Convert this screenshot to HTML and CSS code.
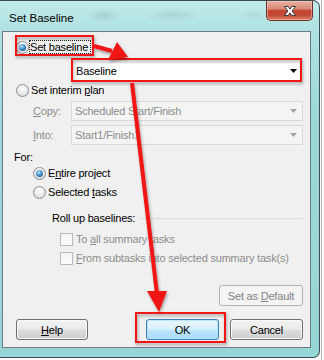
FILE: index.html
```html
<!DOCTYPE html>
<html>
<head>
<meta charset="utf-8">
<link rel="stylesheet" href="styles.css">
</head>
<body>
<div class="screen">
  <div class="window">
    <div class="titlebar">
      <span class="title">Set Baseline</span>
      <div class="close">
        <svg width="14" height="12" viewBox="0 0 14 12"><path d="M1.5 1.5H5.2L7 4.1L8.8 1.5H12.5L9.1 6L12.5 10.5H8.8L7 7.9L5.2 10.5H1.5L4.9 6Z" fill="#fff" stroke="#3b3b3b" stroke-width="1" stroke-linejoin="round"/></svg>
      </div>
    </div>
    <div class="client">
      <div class="row r-setbase"><span class="radio on"></span><span class="focus">Set baseline</span></div>
      <div class="combo main"><span class="ctext">Baseline</span><svg class="arrow" width="7" height="4" viewBox="0 0 7 4"><path d="M0 0H7L3.5 4Z" fill="#000"/></svg></div>
      <div class="row r-interim"><span class="radio"></span><span class="lbl">Set interim <u>p</u>lan</span></div>
      <div class="field r-copy"><span class="flabel"><u>C</u>opy:</span><div class="combo dis"><span class="ctext">Scheduled Start/Finish</span><svg class="arrow" width="7" height="4" viewBox="0 0 7 4"><path d="M0 0H7L3.5 4Z" fill="#a3a3a3"/></svg></div></div>
      <div class="field r-into"><span class="flabel"><u>I</u>nto:</span><div class="combo dis"><span class="ctext">Start1/Finish1</span><svg class="arrow" width="7" height="4" viewBox="0 0 7 4"><path d="M0 0H7L3.5 4Z" fill="#a3a3a3"/></svg></div></div>
      <div class="row r-for">For:</div>
      <div class="row r-entire"><span class="radio on"></span><span class="lbl">E<u>n</u>tire project</span></div>
      <div class="row r-selected"><span class="radio"></span><span class="lbl">Selected <u>t</u>asks</span></div>
      <div class="row r-rollup"><span>Roll up baselines:</span><span class="sep"></span></div>
      <div class="row r-cb1 dis"><span class="check"></span><span class="clbl">To <u>a</u>ll summary tasks</span></div>
      <div class="row r-cb2 dis"><span class="check"></span><span class="clbl"><u>F</u>rom subtasks into selected summary task(s)</span></div>
      <div class="r-default"><span class="btn disabled"><span>Set as <u>D</u>efault</span></span></div>
      <div class="buttons"><span class="btn help"><span><u>H</u>elp</span></span><span class="btn ok">OK</span><span class="btn cancel">Cancel</span></div>
    </div>
  </div>
  <svg class="annot" width="324" height="360" viewBox="0 0 324 360">
    <defs>
      <filter id="sh" x="-20%" y="-20%" width="140%" height="140%">
        <feDropShadow dx="1" dy="2" stdDeviation="1.5" flood-color="#000" flood-opacity="0.35"/>
      </filter>
    </defs>
    <g fill="none" stroke="#f01414" stroke-width="2" filter="url(#sh)">
      <rect x="16" y="36" width="77" height="19"/>
      <rect x="72" y="59" width="229" height="22"/>
      <rect x="136" y="313" width="89" height="29"/>
    </g>
    <g filter="url(#sh)">
      <line x1="94" y1="46" x2="112" y2="51" stroke="#f01414" stroke-width="4"/>
      <polygon points="117,42 108,60 128,57" fill="#f01414"/>
      <line x1="132" y1="83" x2="157" y2="294" stroke="#f01414" stroke-width="4"/>
      <polygon points="147,291 167,291 159,312" fill="#f01414"/>
    </g>
  </svg>
</div>
</body>
</html>
```

FILE: styles.css
```css
html, body {
  margin: 0;
  padding: 0;
}

body {
  font-family: "Liberation Sans", Arial, sans-serif;
  font-size: 11px;
  letter-spacing: -0.2px;
  color: #000;
  background: #f7f7f7;
}

.screen {
  position: relative;
  width: 324px;
  height: 360px;
  overflow: hidden;
  background:
    repeating-linear-gradient(to right, transparent 0, transparent 321px, #b8b8b8 321px, #b8b8b8 322px, transparent 322px, transparent 324px),
    #fafafa;
}

.window {
  box-sizing: border-box;
  width: 320px;
  height: 358px;
  border: 1px solid #3e4c52;
  border-left: none;
  border-radius: 0 7px 7px 0;
  padding-left: 2px;
  background:
    radial-gradient(ellipse 18px 7px at 104px 14px, rgba(90, 120, 120, 0.18), transparent),
    radial-gradient(ellipse 28px 7px at 172px 14px, rgba(90, 120, 120, 0.16), transparent),
    radial-gradient(ellipse 14px 6px at 254px 14px, rgba(90, 120, 120, 0.12), transparent),
    linear-gradient(to bottom, #c3ebeb 0px, #afe1e1 30px, #9cd8d8 120px, #97d6d6 100%);
  display: flex;
  flex-direction: column;
}

.titlebar {
  height: 30px;
  display: flex;
  align-items: flex-start;
  padding-right: 6px;
}

.title {
  font-size: 11.5px;
  letter-spacing: 0;
  line-height: 14px;
  padding-top: 10px;
  padding-left: 7px;
  color: #000;
  flex: 1;
}

.close {
  width: 47px;
  height: 20px;
  box-sizing: border-box;
  border: 1px solid #6b3128;
  border-top: none;
  border-radius: 0 0 5px 5px;
  background: linear-gradient(to bottom, #e9b1a4 0%, #d98a78 40%, #c4432f 52%, #c44a36 75%, #dc7e68 100%);
  box-shadow: inset 0 0 0 1px rgba(255, 220, 210, 0.45);
  display: flex;
  align-items: center;
  justify-content: center;
}

.client {
  box-sizing: border-box;
  width: 309px;
  height: 317px;
  border: 1px solid #6d7c82;
  background: #f0f0f0;
  display: flex;
  flex-direction: column;
  padding: 0 7px 0 13px;
}

.row {
  display: flex;
  align-items: center;
  height: 16px;
  flex: none;
}

.radio {
  width: 13px;
  height: 13px;
  box-sizing: border-box;
  border-radius: 50%;
  border: 1px solid #8b8f91;
  background: radial-gradient(circle at 50% 35%, #ffffff 0%, #eeeeee 45%, #cfd1d2 100%);
  display: flex;
  align-items: center;
  justify-content: center;
  flex: none;
}

.radio.on::after {
  content: "";
  width: 7px;
  height: 7px;
  border-radius: 50%;
  background: radial-gradient(circle at 40% 35%, #bfe6ff 0%, #4d9ad4 40%, #1b5a8c 80%, #163f60 100%);
}

.r-setbase {
  margin-top: 7px;
}

.focus {
  border: 1px dotted #222;
  line-height: 12px;
  padding: 0 2px 0 0;
}

.combo {
  box-sizing: border-box;
  display: flex;
  align-items: center;
  border: 1px solid #abadb3;
  background: #fff;
  padding-left: 3px;
  flex: none;
}

.combo .ctext {
  flex: 1;
}

.combo.main {
  margin-top: 5px;
  margin-left: 56px;
  width: 229px;
  height: 21px;
  border-color: #fff;
}

.combo.main .arrow {
  margin-right: 3px;
}

.r-interim {
  margin-top: 1px;
}

.lbl {
  margin-left: 2px;
}

.field {
  display: flex;
  align-items: center;
  height: 20px;
  flex: none;
}

.r-copy {
  margin-top: 3px;
}

.r-into {
  margin-top: 4px;
}

.flabel {
  padding-left: 17px;
  color: #8d8d8d;
}

.combo.dis {
  margin-left: auto;
  width: 232px;
  height: 20px;
  background: #f4f4f4;
  border-color: #d9d9d9;
  color: #8d8d8d;
}

.combo.dis .arrow {
  margin-right: 5px;
}

.r-for {
  margin-top: 4px;
  margin-left: -2px;
}

.r-entire {
  padding-left: 17px;
}

.r-selected {
  margin-top: 3px;
  padding-left: 17px;
}

.r-rollup {
  margin-top: 10px;
  padding-left: 36px;
}

.sep {
  flex: 1;
  height: 1px;
  margin-left: 5px;
  background: #d5dfe5;
}

.check {
  width: 13px;
  height: 13px;
  box-sizing: border-box;
  border: 1px solid #b9b9b9;
  background: linear-gradient(to bottom, #f4f4f4, #fbfbfb);
  flex: none;
}

.clbl {
  margin-left: 3px;
  color: #8d8d8d;
}

.r-cb1 {
  margin-top: 5px;
  padding-left: 44px;
}

.r-cb2 {
  margin-top: 3px;
  padding-left: 44px;
}

.btn {
  box-sizing: border-box;
  height: 21px;
  display: flex;
  align-items: center;
  justify-content: center;
  border: 1px solid #707070;
  border-radius: 3px;
  background: linear-gradient(to bottom, #f2f2f2 0%, #ebebeb 48%, #dddddd 52%, #cfcfcf 100%);
  box-shadow: inset 0 0 0 1px rgba(255, 255, 255, 0.8);
  color: #000;
  flex: none;
}

.r-default {
  margin-top: 19px;
  display: flex;
  justify-content: flex-end;
}

.btn.disabled {
  width: 84px;
  border-color: #adb2b5;
  background: #f4f4f4;
  box-shadow: none;
  color: #838383;
}

.buttons {
  margin-top: 13px;
  display: flex;
}

.btn.help {
  width: 72px;
}

.btn.ok {
  width: 73px;
  margin-left: auto;
  margin-right: 11px;
  border-color: #3c7fb1;
  background: linear-gradient(to bottom, #eaf6fd 0%, #d9f0fc 48%, #bee6fd 52%, #a7d9f5 100%);
  box-shadow: inset 0 0 0 1px rgba(180, 230, 255, 0.9);
}

.btn.cancel {
  width: 73px;
}

.annot {
  position: absolute;
  left: 0;
  top: 0;
  pointer-events: none;
}
```
